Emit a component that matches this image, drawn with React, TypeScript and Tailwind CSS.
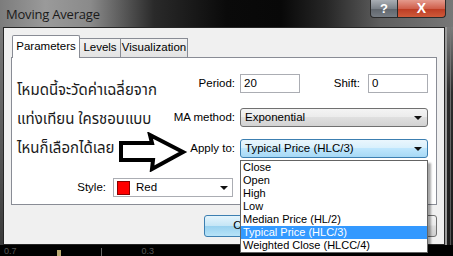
import React from 'react';

const listItems = [
  'Close',
  'Open',
  'High',
  'Low',
  'Median Price (HL/2)',
  'Typical Price (HLC/3)',
  'Weighted Close (HLCC/4)',
];

function Caret() {
  return (
    <svg width="8" height="4" viewBox="0 0 8 4" className="shrink-0">
      <path d="M0 0h8L4 4z" fill="#111" />
    </svg>
  );
}

function Field({ value, className }: { value: string; className: string }) {
  return (
    <div className={`h-[19px] border border-[#abadb3] bg-white pl-[3px] flex items-center ${className}`}>
      {value}
    </div>
  );
}

function Combo({ value, blue }: { value: string; blue?: boolean }) {
  return (
    <div
      className={`w-[188px] h-[19px] rounded-[3px] border flex items-center pl-[4px] pr-[5px] ${
        blue
          ? 'border-[#3c7fb1] bg-[linear-gradient(#eaf6fd,#d9f0fc_45%,#bee6fd_50%,#a7d9f5)]'
          : 'border-[#707070] bg-[linear-gradient(#f4f4f4,#ececec_45%,#dfdfdf_50%,#d2d2d2)]'
      }`}
    >
      <span className="flex-1">{value}</span>
      <Caret />
    </div>
  );
}

function Button({ label, primary }: { label?: string; primary?: boolean }) {
  return (
    <div
      className={`w-[75px] h-[22px] rounded-[3px] border flex items-center justify-center ${
        primary
          ? 'border-[#3c7fb1] bg-[linear-gradient(#e5f4fc,#c4e5f6_50%,#98d1ef_51%,#b7e3f8)]'
          : 'border-[#707070] bg-[linear-gradient(#f2f2f2,#ebebeb_45%,#dddddd_50%,#cfcfcf)]'
      }`}
    >
      {label}
    </div>
  );
}

export default function App() {
  return (
    <div className="relative w-[453px] h-[256px] overflow-hidden bg-black font-['Liberation_Sans',Arial,sans-serif] text-[11.5px] text-black">
      {/* title bar */}
      <div className="h-[27px] flex items-start bg-[linear-gradient(90deg,#7c7c7c_0%,#9a9a9a_10%,#8a8a8a_20%,#2a2a2a_34%,#0a0a0a_50%,#080808_62%,#262626_72%,#5e5e5e_84%,#777777_100%)]">
        <div className="pl-[6px] pt-[5px] text-[13px] text-[#1a1a1a] font-['Open_Sans',sans-serif] tracking-[-0.2px]">
          Moving Average
        </div>
        <div className="ml-auto mr-[7px] flex">
          <div className="w-[28px] h-[18px] rounded-bl-[4px] border border-t-0 border-[#2a2a2a] bg-[linear-gradient(#a9aeb4,#7c8289_50%,#5f656c_51%,#767c83)] flex items-center justify-center text-white font-bold text-[13px]">
            ?
          </div>
          <div className="w-[48px] h-[18px] rounded-br-[4px] border border-t-0 border-l-0 border-[#2a2a2a] bg-[linear-gradient(#e49a8c,#d0604c_50%,#bb3b22_51%,#cf5a3a)] flex items-center justify-center text-white font-bold text-[14px]">
            X
          </div>
        </div>
      </div>

      {/* window body */}
      <div className="flex h-[218px]">
        <div className="w-[3px] bg-[linear-gradient(#7a7a7a,#3a3a3a)]" />
        <div className="w-[442px] border border-[#262626] bg-[#f0f0f0]">
          <div className="pl-[7px] pt-[7px] pr-[6px]">
            {/* tabs */}
            <div className="flex items-end h-[22px] pl-[1px]">
              <div className="relative z-10 w-[68px] h-[23px] -mb-[1px] border border-b-0 border-[#898c95] bg-white rounded-t-[2px] flex items-center justify-center">
                Parameters
              </div>
              <div className="w-[41px] h-[19px] border border-l-0 border-b-0 border-[#898c95] bg-[linear-gradient(#f2f2f2,#e3e3e3)] flex items-center justify-center">
                Levels
              </div>
              <div className="w-[67px] h-[19px] border border-l-0 border-b-0 border-[#898c95] bg-[linear-gradient(#f2f2f2,#e3e3e3)] flex items-center justify-center">
                Visualization
              </div>
            </div>

            {/* panel */}
            <div className="w-[426px] h-[148px] border border-[#898c95] bg-white">
              <div className="flex pt-[16px]">
                <div className="w-[156px] pl-[5px] pt-[2px] whitespace-nowrap font-['Noto_Sans_Thai','Tahoma','Noto_Sans',sans-serif] text-[15px] leading-[29px] text-[#1a1a1a]">
                  <div>โหมดนี้จะวัดค่าเฉลี่ยจาก</div>
                  <div>แท่งเทียน ใครชอบแบบ</div>
                  <div>ไหนก็เลือกได้เลย</div>
                </div>
                <div className="flex flex-col w-[260px]">
                  <div className="flex items-center h-[19px]">
                    <span className="w-[67px] text-right">Period:</span>
                    <Field value="20" className="ml-[5px] w-[60px]" />
                    <span className="flex-1 text-right pr-[8px]">Shift:</span>
                    <Field value="0" className="w-[60px]" />
                  </div>
                  <div className="flex items-center h-[19px] mt-[15px]">
                    <span className="w-[67px] text-right">MA method:</span>
                    <div className="ml-[5px]">
                      <Combo value="Exponential" />
                    </div>
                  </div>
                  <div className="flex items-center h-[19px] mt-[12px]">
                    <span className="w-[67px] text-right">Apply to:</span>
                    <div className="ml-[5px]">
                      <Combo value="Typical Price (HLC/3)" blue />
                    </div>
                  </div>
                </div>
              </div>
              <div className="flex items-center h-[19px] mt-[15px]">
                <span className="w-[94px] text-right">Style:</span>
                <div className="ml-[7px] w-[120px] h-[19px] border border-[#abadb3] bg-white flex items-center pl-[3px] pr-[4px]">
                  <span className="w-[13px] h-[14px] bg-[#ff0000] border border-[#8a0000]" />
                  <span className="ml-[6px] flex-1">Red</span>
                  <Caret />
                </div>
              </div>
            </div>

            {/* buttons (mostly hidden by the open list) */}
            <div className="flex justify-end gap-[4px] mt-[10px] w-[426px]">
              <Button label="OK" primary />
              <Button />
              <Button />
            </div>
          </div>
        </div>
        <div className="w-[8px] flex bg-[linear-gradient(#7c7c7c,#2c2c2c_30%,#1a1a1a)]">
          <div className="w-[2px] bg-[#9a9a9a]" />
          <div className="w-[3px]" />
          <div className="w-[1px] bg-[linear-gradient(#777,#555)]" />
        </div>
      </div>

      {/* chart behind the dialog */}
      <div className="h-[11px] flex items-end text-[9px] leading-[9px] text-[#555] pl-[4px] gap-[40px]">
        <span>0.7</span>
        <span className="w-[4px] h-[6px] bg-[#b8a870]" />
        <span className="w-[1px] h-[8px] bg-[#666]" />
        <span>0.3</span>
      </div>

      {/* annotation arrow */}
      <svg className="absolute left-[118px] top-[132px]" width="70" height="40" viewBox="0 0 70 40">
        <polygon
          points="3,11 34,11 32,3 65,20 34,37 35,28 3,28"
          fill="#fff"
          stroke="#000"
          strokeWidth="4"
          strokeLinejoin="miter"
        />
      </svg>

      {/* open drop-down list */}
      <div className="absolute left-[240px] top-[160px] w-[188px] border border-[#646464] bg-white text-[11px] shadow-[3px_3px_2px_rgba(0,0,0,0.35)]">
        {listItems.map((item) => (
          <div
            key={item}
            className={`h-[13px] leading-[13px] pl-[2px] ${
              item === 'Typical Price (HLC/3)' ? 'bg-[#3399ff] text-white' : ''
            }`}
          >
            {item}
          </div>
        ))}
      </div>
    </div>
  );
}
